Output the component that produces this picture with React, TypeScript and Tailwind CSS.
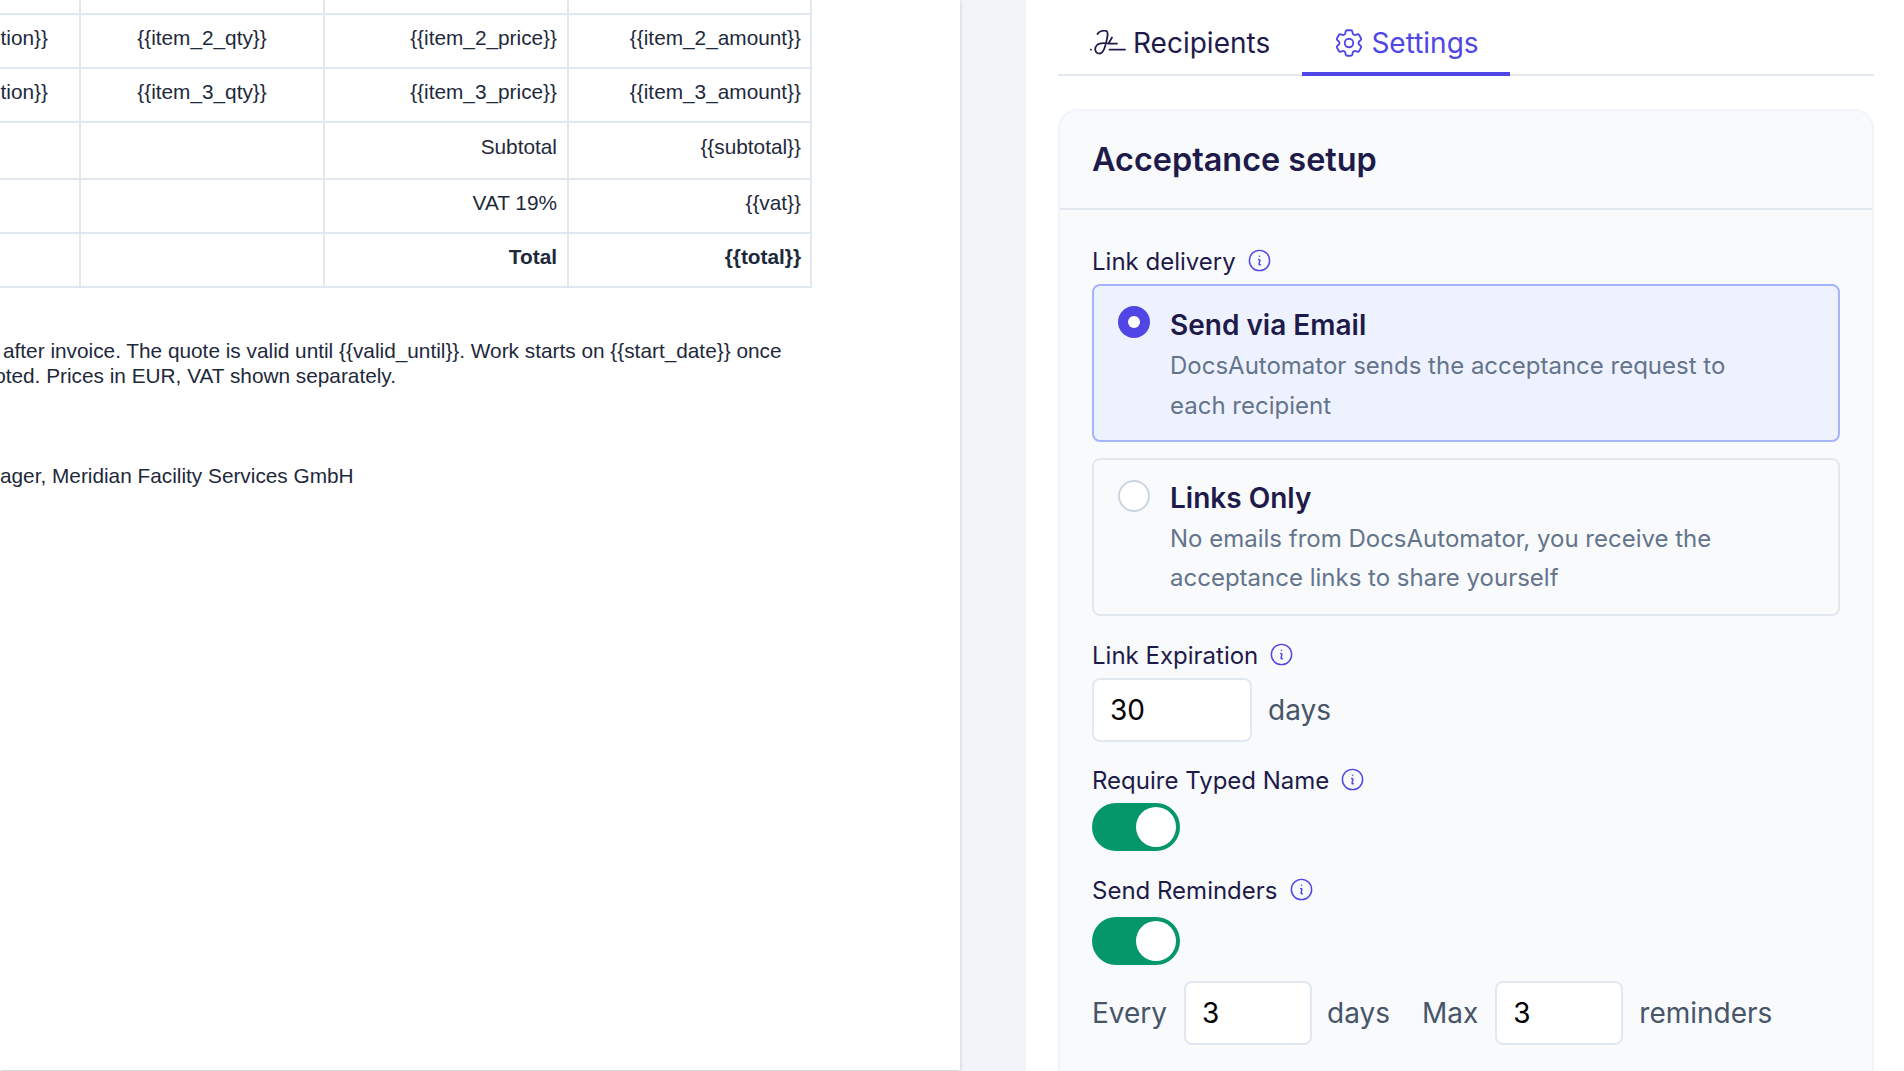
import React from 'react';
import { HiOutlineCog6Tooth, HiOutlineInformationCircle } from 'react-icons/hi2';

const inter = "font-['Inter',sans-serif]";

function SignatureIcon() {
  return (
    <svg width="36" height="26" viewBox="0 0 36 26" fill="none" stroke="currentColor" strokeWidth="1.75" strokeLinecap="round" strokeLinejoin="round" className="shrink-0">
      <path d="M0.7 19.5h.3" />
      <path d="M7.5 4C9 1 14 0 16.5 1c2.5 1.5.5 8-1 14-1.500 6-3.500 9-7 8.500-3.500-.5-4.500-5.500-1.500-8.500 2.500-2.500 7-2 11-1.500" />
      <path d="M22 7.500l-3.500 6H27" />
      <path d="M19.500 19.500H35" />
    </svg>
  );
}

function TableRow({ cells, bold, height, pad = 'pt-[7px]' }: { cells: string[]; bold?: boolean; height: string; pad?: string }) {
  return (
    <div className={`grid grid-cols-[81px_244px_244px_243px] border-b-2 border-[#e2e8f0] ${height}`}>
      <div className={`flex justify-end overflow-hidden whitespace-nowrap border-r-2 border-[#e2e8f0] pr-[31px] ${pad}`}>{cells[0]}</div>
      <div className={`border-r-2 border-[#e2e8f0] text-center ${pad}`}>{cells[1]}</div>
      <div className={`border-r-2 border-[#e2e8f0] pr-[10px] text-right ${pad} ${bold ? 'font-bold' : ''}`}>{cells[2]}</div>
      <div className={`border-r-2 border-[#e2e8f0] pr-[9px] text-right ${pad} ${bold ? 'font-bold' : ''}`}>{cells[3]}</div>
    </div>
  );
}

function Label({ text }: { text: string }) {
  return (
    <div className="flex items-center gap-[10px] text-[24px] leading-[30px] text-[#1e1b4b]">
      <span>{text}</span>
      <HiOutlineInformationCircle className="mb-[3px] h-[27px] w-[27px] text-[#4f46e5] [&_path]:[stroke-width:1.3]" />
    </div>
  );
}

function RadioCard({ selected, title, lines }: { selected?: boolean; title: string; lines: string[] }) {
  return (
    <div className={`flex h-[158px] gap-[20px] rounded-[8px] border-2 pl-[24px] pt-[20px] ${selected ? 'border-[#a5b4fc] bg-[#eef2ff]' : 'border-[#e2e8f0]'}`}>
      {selected ? (
        <div className="flex h-[32px] w-[32px] shrink-0 items-center justify-center rounded-full bg-[#4f46e5]">
          <div className="h-[12px] w-[12px] rounded-full bg-white" />
        </div>
      ) : (
        <div className="h-[32px] w-[32px] shrink-0 rounded-full border-2 border-[#cbd5e1] bg-white" />
      )}
      <div>
        <div className={`text-[28px] font-semibold text-[#1e1b4b] ${selected ? 'leading-[38px]' : 'leading-[36px]'}`}>{title}</div>
        <div className={`text-[24px] text-[#64748b] ${selected ? 'mt-[2px] leading-[40px]' : 'mt-[3px] leading-[39px]'}`}>
          {lines.map((line) => (
            <div key={line}>{line}</div>
          ))}
        </div>
      </div>
    </div>
  );
}

function NumberBox({ value, width }: { value: string; width: string }) {
  return (
    <div className={`flex h-[64px] items-center rounded-[8px] border-2 border-[#e2e8f0] bg-white pl-[16px] text-[28px] text-black ${width}`}>
      {value}
    </div>
  );
}

function Toggle() {
  return (
    <div className="flex h-[48px] w-[88px] items-center justify-end rounded-full bg-[#059669] pr-[4px]">
      <div className="h-[40px] w-[40px] rounded-full bg-white" />
    </div>
  );
}

export default function App() {
  return (
    <div className="flex h-[1071px] w-[1904px] overflow-hidden bg-white">
      <div className="w-[1026px] shrink-0 bg-[#f1f5f9]">
        <div className="h-[1070px] w-[960px] overflow-hidden bg-white font-['Liberation_Sans',sans-serif] text-[20.8px] text-[#1e293b] shadow-[0_1px_4px_rgba(0,0,0,0.2)]">
          <div className="w-[812px]">
            <div className="grid h-[15px] grid-cols-[81px_244px_244px_243px] border-b-2 border-[#e2e8f0]">
              <div className="border-r-2 border-[#e2e8f0]" />
              <div className="border-r-2 border-[#e2e8f0]" />
              <div className="border-r-2 border-[#e2e8f0]" />
              <div className="border-r-2 border-[#e2e8f0]" />
            </div>
            <TableRow height="h-[54px]" cells={['{{item_2_description}}', '{{item_2_qty}}', '{{item_2_price}}', '{{item_2_amount}}']} />
            <TableRow height="h-[54px]" cells={['{{item_3_description}}', '{{item_3_qty}}', '{{item_3_price}}', '{{item_3_amount}}']} />
            <TableRow height="h-[57px]" pad="pt-[8px]" cells={['', '', 'Subtotal', '{{subtotal}}']} />
            <TableRow height="h-[54px]" cells={['', '', 'VAT 19%', '{{vat}}']} />
            <TableRow height="h-[54px]" bold cells={['', '', 'Total', '{{total}}']} />
          </div>
          <div className="mt-[50px] whitespace-nowrap leading-[25px]">
            <div className="pl-[3px]">after invoice. The quote is valid until {'{{valid_until}}'}. Work starts on {'{{start_date}}'} once</div>
            <div className="-ml-[29px]">quoted. Prices in EUR, VAT shown separately.</div>
            <div className="-ml-[111px] mt-[75px]">Project Manager, Meridian Facility Services GmbH</div>
          </div>
        </div>
      </div>
      <div className={`flex-1 pl-[32px] pr-[30px] ${inter}`}>
        <div className="flex h-[76px] border-b-2 border-[#e2e8f0] text-[28px]">
          <div className="flex h-[76px] w-[244px] items-center gap-[7px] pl-[32px] pt-[9px] text-[#1e1b4b]">
            <SignatureIcon />
            <span>Recipients</span>
          </div>
          <div className="flex h-[76px] w-[208px] items-center justify-center gap-[5px] border-b-4 border-[#4f46e5] pr-[1px] pt-[13px] text-[#4f46e5]">
            <HiOutlineCog6Tooth className="h-[34px] w-[34px] [&_path]:[stroke-width:1.3]" />
            <span>Settings</span>
          </div>
        </div>
        <div className="mt-[33px] h-[1000px] rounded-[20px] border-2 border-[#f1f5f9] bg-[#f8fafc]">
          <div className="flex h-[99px] items-center border-b-2 border-[#e2e8f0] pl-[32px] pt-[1px] text-[32.4px] font-semibold text-[#1e1b4b]">Acceptance setup</div>
          <div className="px-[32px] pt-[37px]">
            <Label text="Link delivery" />
            <div className="mt-[7px] flex flex-col gap-[16px]">
              <RadioCard selected title="Send via Email" lines={['DocsAutomator sends the acceptance request to', 'each recipient']} />
              <RadioCard title="Links Only" lines={['No emails from DocsAutomator, you receive the', 'acceptance links to share yourself']} />
            </div>
            <div className="mt-[25px]"><Label text="Link Expiration" /></div>
            <div className="mt-[7px] flex items-center gap-[16px] text-[28px] text-[#475569]">
              <NumberBox value="30" width="w-[160px]" />
              <span>days</span>
            </div>
            <div className="mt-[24px]"><Label text="Require Typed Name" /></div>
            <div className="mt-[7px]"><Toggle /></div>
            <div className="mt-[25px]"><Label text="Send Reminders" /></div>
            <div className="mt-[11px]"><Toggle /></div>
            <div className="mt-[16px] flex items-center text-[28px] text-[#475569]">
              <span>Every</span>
              <NumberBox value="3" width="ml-[17px] w-[128px]" />
              <span className="ml-[15px]">days</span>
              <span className="ml-[32px]">Max</span>
              <NumberBox value="3" width="ml-[17px] w-[128px]" />
              <span className="ml-[16px]">reminders</span>
            </div>
          </div>
        </div>
      </div>
    </div>
  );
}
